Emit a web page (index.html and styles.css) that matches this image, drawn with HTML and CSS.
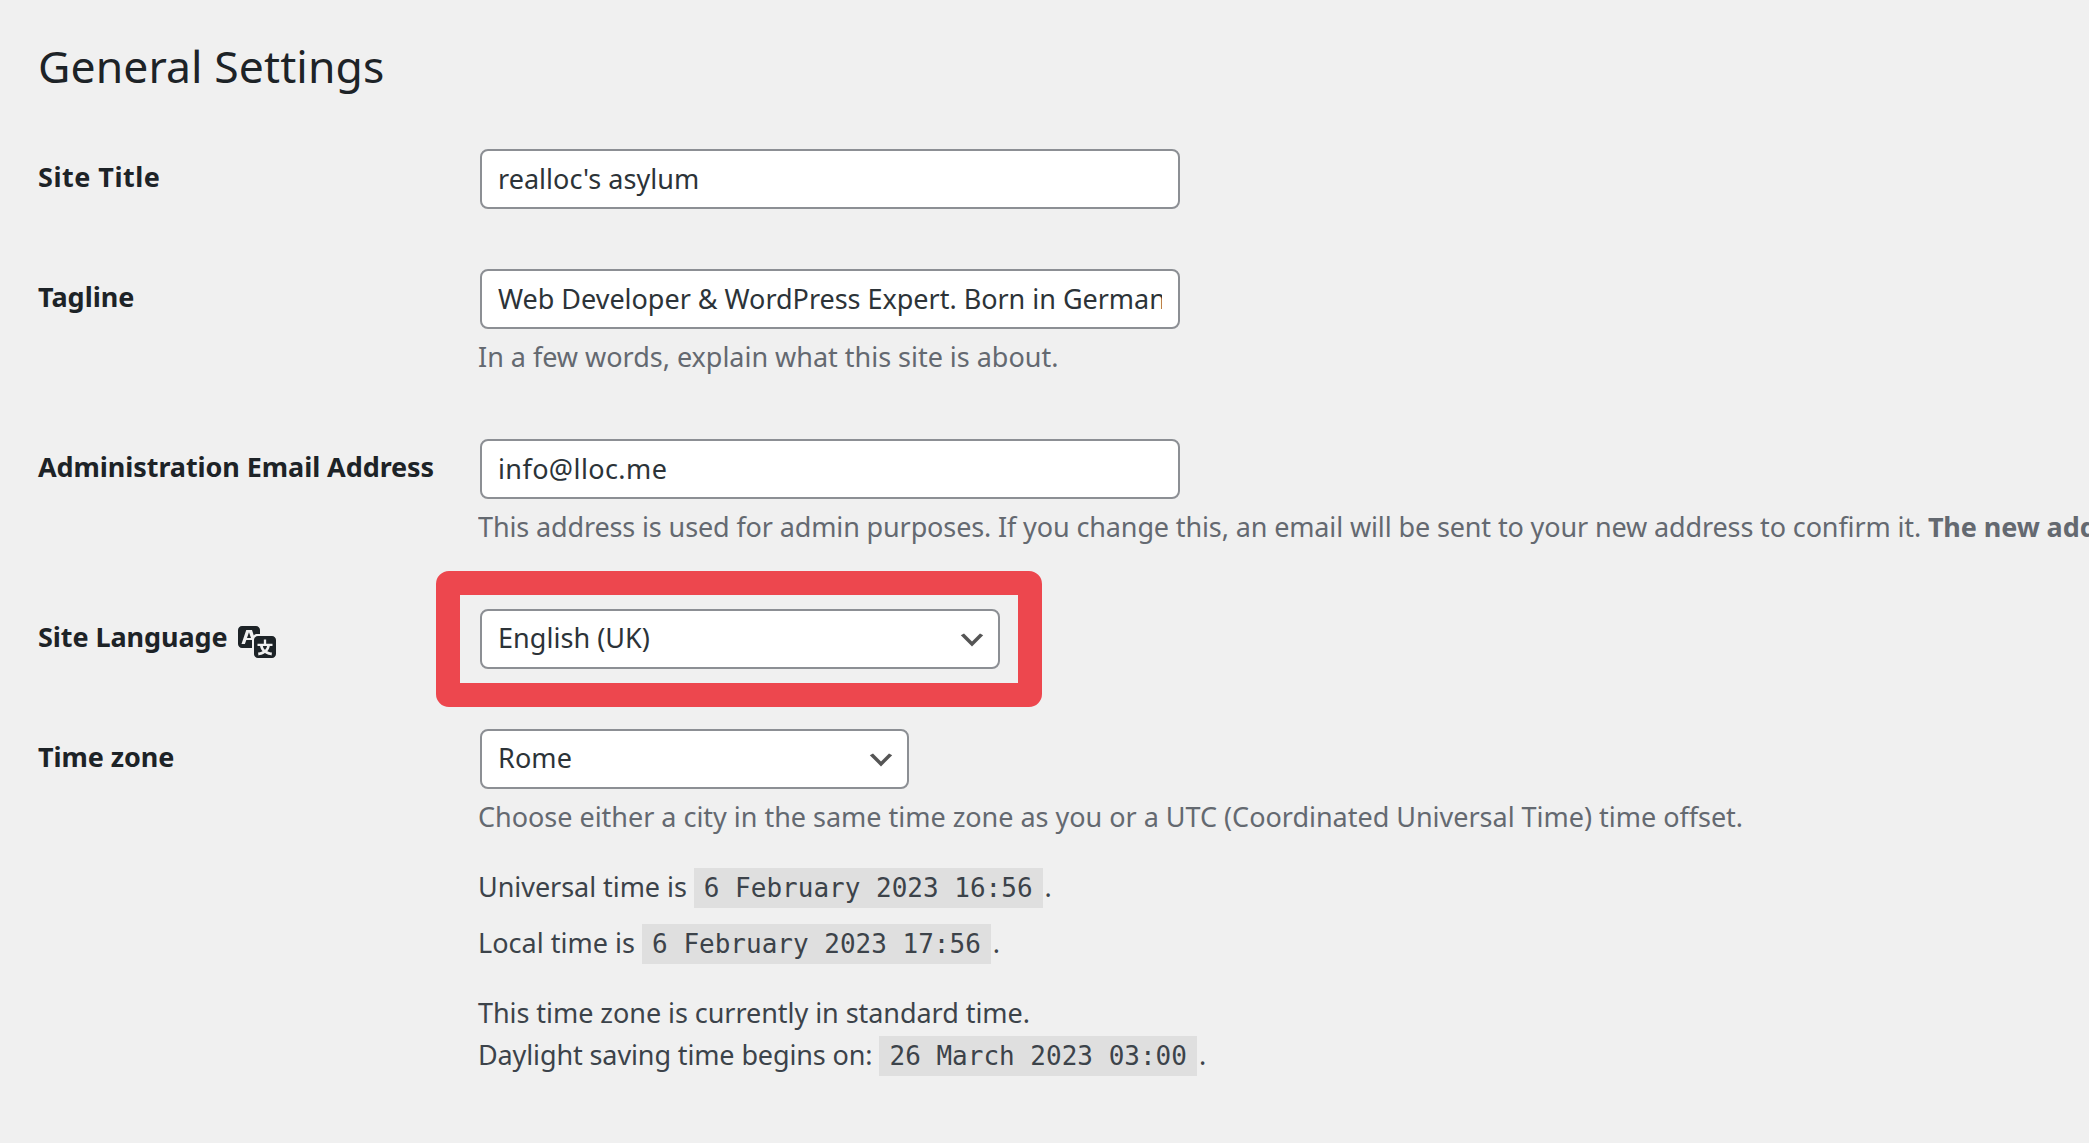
FILE: index.html
```
<!DOCTYPE html>
<html lang="en-GB">
<head>
<meta charset="utf-8">
<title>General Settings</title>
<link rel="stylesheet" href="styles.css">
</head>
<body>
<main class="wrap">
  <h1 class="title">General Settings</h1>
  <form class="form">
    <div class="row">
      <label class="label label-site" for="blogname">Site Title</label>
      <div class="field">
        <input class="input" id="blogname" type="text" value="realloc's asylum">
      </div>
    </div>
    <div class="row row-tagline">
      <label class="label" for="tagline">Tagline</label>
      <div class="field">
        <input class="input input-tagline" id="tagline" type="text" value="Web Developer &amp; WordPress Expert. Born in German">
        <p class="description">In a few words, explain what this site is about.</p>
      </div>
    </div>
    <div class="row row-email">
      <label class="label label-long" for="email">Administration Email Address</label>
      <div class="field">
        <input class="input input-email" id="email" type="text" value="info@lloc.me">
        <p class="description description-email">This address is used for admin purposes. If you change this, an email will be sent to your new address to confirm it. <strong class="notice">The new add</strong></p>
      </div>
    </div>
    <div class="row">
      <div class="label label-long label-language">Site Language
        <svg class="translation" viewBox="0 0 20 20"><path d="M11 7H9.49c-.63 0-1.25.3-1.59.7L7 5H4.13l-2.39 7h1.69l.74-2H7v4H2c-1.1 0-2-.9-2-2V5c0-1.1.9-2 2-2h7c1.1 0 2 .9 2 2v2zM6.51 9H4.49l1-2.93zM10 8h7c1.1 0 2 .9 2 2v7c0 1.1-.9 2-2 2h-7c-1.1 0-2-.9-2-2v-7c0-1.1.9-2 2-2zm7.25 5v-1.08h-3.17V9.75h-1.16v2.17H9.75V13h1.28c.11.85.56 1.85 1.28 2.62-.87.36-1.89.62-2.31.62-.01.02.22.97.2 1.46.84 0 2.21-.5 3.28-1.15 1.09.65 2.48 1.15 3.34 1.15-.02-.49.2-1.44.2-1.46-.43 0-1.49-.27-2.38-.63.7-.77 1.14-1.77 1.25-2.61h1.36zm-3.81 1.93c-.5-.46-.85-1.13-1.01-1.93h2.09c-.17.8-.51 1.47-1 1.93l-.04.03s-.03-.02-.04-.03z"/></svg>
      </div>
      <div class="field">
        <div class="select select-language"><span>English (UK)</span>
          <svg class="chevron" viewBox="0 0 20 20"><path d="M5 6l5 5 5-5 2 1-7 7-7-7 2-1z"/></svg>
        </div>
        <div class="highlight"></div>
      </div>
    </div>
    <div class="row row-zone">
      <div class="label label-long">Time zone</div>
      <div class="field">
        <div class="select select-zone"><span>Rome</span>
          <svg class="chevron" viewBox="0 0 20 20"><path d="M5 6l5 5 5-5 2 1-7 7-7-7 2-1z"/></svg>
        </div>
        <p class="description">Choose either a city in the same time zone as you or a UTC (Coordinated Universal Time) time offset.</p>
        <p class="info info-universal"><span>Universal time is</span><code>6 February 2023 16:56</code>.</p>
        <p class="info info-local"><span class="local">Local time is</span><code>6 February 2023 17:56</code>.</p>
        <p class="info info-standard">This time zone is currently in standard time.</p>
        <p class="info"><span class="daylight">Daylight saving time begins on:</span><code>26 March 2023 03:00</code>.</p>
      </div>
    </div>
  </form>
</main>
</body>
</html>
```
FILE: styles.css
```
* { box-sizing: border-box; }

body {
  margin: 0;
  background: #f0f0f0;
  color: #3c434a;
  font: 27px/42px "Noto Sans", "Open Sans", sans-serif;
  overflow: hidden;
}

.wrap { padding: 36px 0 0 38px; }

.title {
  margin: 0;
  height: 83px;
  color: #1d2327;
  font-size: 44.5px;
  font-weight: 400;
  line-height: 60px;
  letter-spacing: 0.09px;
}

.row {
  display: grid;
  grid-template-columns: 440px 1611px;
  height: 120px;
}

.row-tagline, .row-email { height: 170px; }
.row-zone { height: auto; }

.label {
  padding-top: 40px;
  color: #1d2327;
  font-weight: 700;
  line-height: 36px;
}

.label-site { letter-spacing: 0.5px; }
.label-long { letter-spacing: -0.08px; }

.label-language {
  display: flex;
  align-items: flex-start;
  gap: 10px;
}

.translation {
  width: 40px;
  height: 40px;
  margin-top: 1px;
  fill: #1d2327;
}

.field {
  position: relative;
  padding-top: 30px;
}

.input, .select {
  display: flex;
  width: 700px;
  height: 60px;
  margin: 0 2px;
  padding: 0 16px 2px;
  border: 2px solid #8c8f94;
  border-radius: 8px;
  background: #fff;
  color: #2c3338;
  font: inherit;
  letter-spacing: 0.04px;
}

.input-tagline { letter-spacing: -0.02px; }
.input-email { letter-spacing: 0.4px; }

.select {
  align-items: center;
  justify-content: space-between;
  padding-right: 10px;
}

.select-language { width: 520px; }

.select-zone {
  width: 429px;
  letter-spacing: 0.1px;
}

.chevron {
  width: 32px;
  height: 32px;
  margin-top: 3px;
  fill: #555;
}

.highlight {
  position: absolute;
  top: -8px;
  left: -42px;
  width: 606px;
  height: 136px;
  border: 24px solid #ed474e;
  border-radius: 13px;
}

.description {
  margin: 7px 0 0;
  color: #646970;
  letter-spacing: -0.02px;
  white-space: nowrap;
}

.description-email {
  overflow: hidden;
  letter-spacing: -0.128px;
}

.notice { letter-spacing: -0.1px; }

.info {
  display: flex;
  margin: 0;
}

.info-universal {
  margin-top: 28px;
  letter-spacing: -0.05px;
}

.info-local { margin: 14px 0 28px; }
.info-standard { letter-spacing: -0.05px; }
.local { letter-spacing: 0.03px; }
.daylight { letter-spacing: -0.12px; }

code {
  height: 40px;
  margin: 2px 2px 0 7px;
  padding: 0 10px;
  background: #dfdfdf;
  font: 26px/40px "DejaVu Sans Mono", monospace;
  letter-spacing: 0;
}
```
